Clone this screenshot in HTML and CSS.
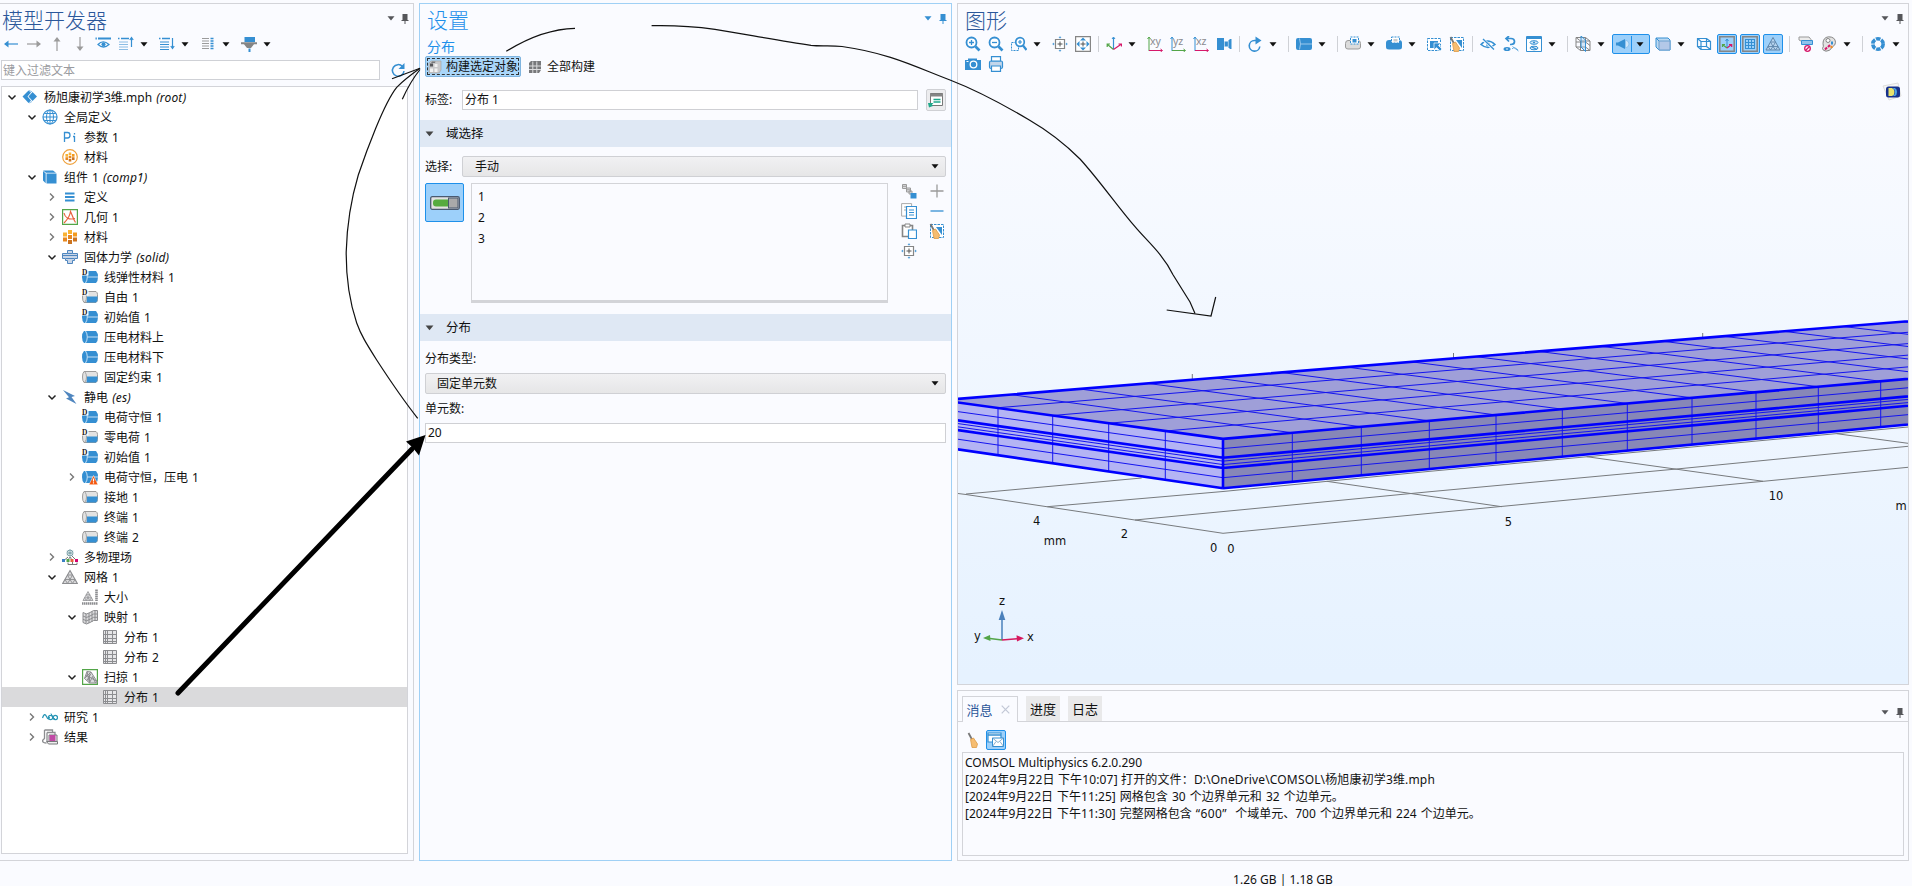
FILE: index.html
```html
<!DOCTYPE html>
<html lang="zh-CN">
<head>
<meta charset="utf-8">
<title>COMSOL Multiphysics</title>
<link rel="stylesheet" href="styles.css">
</head>
<body>
<svg class="defs" width="0" height="0">
  <defs>
    <symbol id="caret" viewBox="0 0 8 5"><path d="M0.5 0.3h7L4 4.6z" fill="currentColor"/></symbol>
    <symbol id="pin" viewBox="0 0 8 10"><path d="M1.5 0h5v6H7.500v1h-3v3h-1V7h-3V6h1z" fill="currentColor"/></symbol>
    <symbol id="open" viewBox="0 0 12 12"><path d="M2.500 4.500L6 8l3.500-3.500" fill="none" stroke="#222" stroke-width="1.500"/></symbol>
    <symbol id="shut" viewBox="0 0 12 12"><path d="M4 2.500L7.500 6L4 9.500" fill="none" stroke="#777" stroke-width="1.400"/></symbol>
    <symbol id="root" viewBox="0 0 16 16"><path d="M.5 7.500L6.500 1.500l2.500 2-3.500 4 3.500 4-2.500 2.500z" fill="#358fd2"/><path d="M6.500 7.500L10.500 3l4.500 4.500L10.500 12z" fill="#358fd2"/><path d="M7 1.500l3 1.200M7 14l3-1.500" stroke="#8fc3ec"/></symbol>
    <symbol id="globe" viewBox="0 0 16 16"><g fill="none" stroke="#358fd2"><circle cx="8" cy="8" r="7" stroke-width="1.200"/><ellipse cx="8" cy="8" rx="3.500" ry="7"/><path d="M8 1v14M1 8h14M2.500 4.500h11M2.500 11.500h11"/></g></symbol>
    <symbol id="param" viewBox="0 0 16 16"><path d="M2.500 13V3.500h3q2.500 0 2.500 2.700T5.500 9h-3M12.500 7v6M11 7.500h1.500M12.500 4v1.500" fill="none" stroke="#358fd2" stroke-width="1.300"/></symbol>
    <symbol id="blocks" viewBox="0 0 16 16"><path d="M6 1h4v4H6z" fill="#f9b233"/><path d="M1 3.500h4v4H1z" fill="#f9b233"/><path d="M11 3.500h4v4h-4z" fill="#f39a1e"/><path d="M6 6h4v4H6zM1 8.500h4v4H1z" fill="#e8871e"/><path d="M11 8.500h4v4h-4zM6 11h4v4H6z" fill="#cc7420"/></symbol>
    <symbol id="mats" viewBox="0 0 16 16"><circle cx="8" cy="8" r="7.300" fill="#fff" stroke="#efa13c" stroke-width="1.200"/><use href="#blocks" x="2.800" y="2.800" width="10.400" height="10.400"/></symbol>
    <symbol id="comp" viewBox="0 0 16 16"><path d="M4.500 4.500h10v10h-10z" fill="#358fd2"/><path d="M1 1.500h10l3 2.200H4zM1 2v9.500l2.700 2.700V4.600z" fill="#358fd2"/></symbol>
    <symbol id="defs3" viewBox="0 0 16 16"><path d="M3 4.500h9.500M3 8h9.500M3 11.500h9.500" stroke="#358fd2" stroke-width="2"/></symbol>
    <symbol id="geom" viewBox="0 0 16 16"><path d="M0.600 0.600h14.800v14.800H0.600z" fill="#fff" stroke="#53a548" stroke-width="1.200"/><path d="M2 14C4 12 8 7 8.500 2.500c2 4 3 8 5 11M2 4c1 5 5 7 11 5.500" fill="none" stroke="#e8613c" stroke-width="1.200"/></symbol>
    <symbol id="solid" viewBox="0 0 16 16"><path d="M5.500 1.500h5v3h5v5h-3v2h-2v3h-5v-3h-2v-2h-3v-5h5z" fill="#c9d6e8" stroke="#4f86bf"/><path d="M0.500 6.500h15M4 9.500h8M5.500 4.500h5" stroke="#4f86bf"/></symbol>
    <symbol id="dom" viewBox="0 0 16 16"><path d="M2 2h12q2 2 2 6t-2 6H2q-2-2-2-6t2-6z" fill="#358fd2"/><path d="M3.500 2q1.800 2.500 1.800 6t-1.800 6M5.500 8H16" fill="none" stroke="#d6e9f8" stroke-width=".9"/></symbol>
    <symbol id="bnd" viewBox="0 0 16 16"><path d="M2 2.500h12q1.500 1 1.500 3v5q0 2-1.500 3H2Q.5 12 .5 8T2 2.500z" fill="#e2e2e2" stroke="#9b9b9b"/><path d="M5 7.500h10.500v3q0 2-1.500 3H4.500z" fill="#358fd2"/><path d="M3 3q1.500 2 1.500 5T3 13" fill="none" stroke="#a5a5a5"/></symbol>
    <symbol id="dd" viewBox="0 0 9 7"><path d="M0 0h6.500v6.500H0z" fill="#fff"/><text class="dmark" x="0" y="6">D</text></symbol>
    <symbol id="domd" viewBox="0 0 16 16"><use href="#dom" width="16" height="16"/><use href="#dd" width="9" height="7"/></symbol>
    <symbol id="bndd" viewBox="0 0 16 16"><use href="#bnd" width="16" height="16"/><use href="#dd" width="9" height="7"/></symbol>
    <symbol id="warn" viewBox="0 0 16 16"><use href="#dom" width="16" height="16"/><path d="M11.500 6.500L16 15.700H7z" fill="#f4570e" stroke="#fff" stroke-width=".5"/><path d="M11.500 9.500v3M11.500 13.300v1.200" stroke="#fff" stroke-width="1.200"/></symbol>
    <symbol id="bolt" viewBox="0 0 16 16"><path d="M1 1l12 6-3.500 1L14.500 15 4 9.500 7 8.300z" fill="#4f86bf"/></symbol>
    <symbol id="multi" viewBox="0 0 16 16"><g fill="none" stroke="#7ba0a8"><circle cx="8" cy="4" r="3"/><path d="M8 .5v7M4.800 2.200l6.400 3.600M4.800 5.800l6.400-3.600"/></g><path d="M6 8L2.500 11M8 8l-2 3M8.500 8l1 3M10 7l4 4M6 13.500v2h9v-2M10.500 12v3.500" fill="none" stroke="#777"/><path d="M0 10h3v3H0z" fill="#3b7fc4"/><path d="M4.500 10h3v3h-3z" fill="#53a548"/><path d="M8.500 10h3v3h-3z" fill="#e8613c"/><path d="M13 10h3v3h-3z" fill="#d6006e"/></symbol>
    <symbol id="mesh" viewBox="0 0 16 16"><path d="M8 1.500L15.300 14.500H.7z" fill="#dcdcde" stroke="#8c8d90" stroke-width="1.100"/><path d="M5.500 6h5L8 10.500zM3 10.500h10L10.500 14.500 8 10.500 5.500 14.500z" fill="none" stroke="#8c8d90" stroke-width=".9"/></symbol>
    <symbol id="size" viewBox="0 0 16 16"><use href="#mesh" x="0" y="1.500" width="12" height="11"/><path d="M14.500 .5V12" stroke="#8c8d90" stroke-width="2.600" stroke-dasharray="1.500 .5"/><path d="M0 14.500h16" stroke="#8c8d90" stroke-width="2.600" stroke-dasharray="1.500 .5"/></symbol>
    <symbol id="map" viewBox="0 0 16 16"><path d="M1 3.500q3.500 3 7 0t7.500-2v10q-4-1-7.500 2t-7 0z" fill="#dcdcde" stroke="#8c8d90"/><path d="M1 7q3.500 3 7 0t7.500-2M1 10.300q3.500 3 7 0t7.500-2M4 4.500v10M7 4v10M10 2.500V13M13 1.500v10" fill="none" stroke="#8c8d90"/></symbol>
    <symbol id="dist" viewBox="0 0 16 16"><path d="M1.500 1.500h13v13h-13z" fill="#e6e6e8" stroke="#8c8d90"/><path d="M3.500 1.500v13M5.500 1.500v13M10.500 1.500v13M1.500 5.500h13M1.500 9.500h13M1.500 12.500h13" stroke="#8c8d90"/></symbol>
    <symbol id="sweep" viewBox="0 0 16 16"><path d="M.6.6h14.800v14.800H.6z" fill="#fff" stroke="#53a548" stroke-width="1.200"/><path d="M2.500 9.500L5 2.500l4 .5 6 9.500v1.500H7.500z" fill="#dcdcde" stroke="#8c8d90"/><path d="M2.500 9.500L9 3M5 2.500L7.500 14l3-6.500 3 6.500M7.500 5.500v8M4 6l11 6.500M5 11.500l4-7" fill="none" stroke="#8c8d90"/></symbol>
    <symbol id="study" viewBox="0 0 16 16"><path d="M.5 9q2-6 4-1.500t3 .5" fill="none" stroke="#2795b5" stroke-width="1.200"/><circle cx="8.500" cy="8.500" r="2.200" fill="none" stroke="#2795b5" stroke-width="1.200"/><circle cx="13.300" cy="8.500" r="2.200" fill="none" stroke="#2795b5" stroke-width="1.200"/><path d="M9 4.500q1 2 2.500 4.500l1.500 1" fill="none" stroke="#2795b5"/></symbol>
    <symbol id="result" viewBox="0 0 16 16"><path d="M2.500 1h8v3M2.500 1v8.500L.5 11.500q0 2.500 4 2.500M5 3.500h8V6M5 3.500V12" fill="none" stroke="#8c8d90" stroke-width="1.300"/><path d="M7 6h8v6.500H7zM4.500 12.500h11v2.500h-9z" fill="#efefef" stroke="#77787b"/><path d="M7.500 6h6v6h-6z" fill="#c04aa5"/></symbol>

    <symbol id="zin" viewBox="0 0 16 16"><circle cx="6.500" cy="6.500" r="5" fill="#fff" stroke="#358fd2" stroke-width="1.800"/><path d="M10.500 10.500l4 4" stroke="#358fd2" stroke-width="2.600"/><path d="M6.500 4v5M4 6.500h5" stroke="#358fd2" stroke-width="1.300"/></symbol>
    <symbol id="zout" viewBox="0 0 16 16"><circle cx="6.500" cy="6.500" r="5" fill="#fff" stroke="#358fd2" stroke-width="1.800"/><path d="M10.500 10.500l4 4" stroke="#358fd2" stroke-width="2.600"/><path d="M4 6.500h5" stroke="#358fd2" stroke-width="1.300"/></symbol>
    <symbol id="zbox" viewBox="0 0 16 16"><path d="M.5 6.500h7v8h-7z" fill="none" stroke="#358fd2" stroke-dasharray="2 1"/><circle cx="9" cy="6" r="4.300" fill="#fff" stroke="#358fd2" stroke-width="1.700"/><path d="M12 9.500l3.500 4.500" stroke="#358fd2" stroke-width="2.200"/><path d="M9 4v4M7 6h4" stroke="#358fd2" stroke-width="1.200"/></symbol>
    <symbol id="zsel" viewBox="0 0 16 16"><path d="M3.500 3.500h9v9h-9z" fill="#fff" stroke="#858585" stroke-width="1.200"/><path d="M8 5.500v5M5.500 8h5" stroke="#555"/><path d="M7 1.800L8 .6l1 1.200zM7 14.200l1 1.200 1-1.200zM1.800 7L.6 8l1.200 1zM14.200 7l1.200 1-1.200 1z" fill="#358fd2" stroke="#358fd2" stroke-width=".5"/></symbol>
    <symbol id="zext" viewBox="0 0 16 16"><path d="M.6.600h14.800v14.800H.6z" fill="#fff" stroke="#858585" stroke-width="1.200"/><path d="M8 5.500v5M5.500 8h5" stroke="#555"/><path d="M5 4.500L8 1.500l3 3zM5 11.500l3 3 3-3zM4.500 5L1.500 8l3 3zM11.500 5l3 3-3 3z" fill="#358fd2"/></symbol>
    <symbol id="axes" viewBox="0 0 16 16"><path d="M7.500 1.500V13" stroke="#358fd2" stroke-width="1.200"/><path d="M6 3L7.500 1 9 3" fill="none" stroke="#358fd2"/><path d="M7.500 13.500L1.500 8.500M1.200 11V8H4" fill="none" stroke="#53a548" stroke-width="1.200"/><path d="M7.500 13.500L15.500 8M12.500 8h3v2.500" fill="none" stroke="#d6186a" stroke-width="1.200"/></symbol>
    <symbol id="vxy" viewBox="0 0 16 16"><path d="M2 15V1.500M.5 3L2 1l1.500 2" fill="none" stroke="#53a548"/><path d="M2 14.500h13M13.500 13l2 1.500-2 1.500" fill="none" stroke="#d6186a"/></symbol>
    <symbol id="vyz" viewBox="0 0 16 16"><path d="M2 15V1.500M.5 3L2 1l1.500 2" fill="none" stroke="#358fd2"/><path d="M2 14.500h13M13.500 13l2 1.500-2 1.500" fill="none" stroke="#53a548"/></symbol>
    <symbol id="vxz" viewBox="0 0 16 16"><path d="M2 15V1.500M.5 3L2 1l1.500 2" fill="none" stroke="#358fd2"/><path d="M2 14.500h13M13.500 13l2 1.500-2 1.500" fill="none" stroke="#d6186a"/></symbol>
    <symbol id="cam2" viewBox="0 0 16 16"><path d="M1 2h7v12H1z" fill="#358fd2"/><path d="M8 5.500h4v5H8zM12 5l2-2h1.500v10H14l-2-2z" fill="#358fd2"/><path d="M8.500 5v6M12.300 5v6" stroke="#d6e9f8" stroke-width=".7"/></symbol>
    <symbol id="rot" viewBox="0 0 16 16"><path d="M10 4.500H7.500a5.300 5.300 0 1 0 5.300 6" fill="none" stroke="#358fd2" stroke-width="1.600"/><path d="M8.500 .5L14.500 4.500l-6 4z" fill="#358fd2"/></symbol>
    <symbol id="cyl" viewBox="0 0 16 16"><rect x="0" y="2" width="16" height="12" rx="2" fill="#358fd2"/><path d="M3.500 2.500q2 5.500 0 11M5 8h11" fill="none" stroke="#9cc9ec"/></symbol>
    <symbol id="selg" viewBox="0 0 16 16"><path d="M3 4.500h10q2.500 0 2.500 3v3.500q0 2-2.500 2H3q-2.500 0-2.500-2V7.500q0-3 2.500-3z" fill="#dcdcdc" stroke="#9b9b9b"/><path d="M5.500 1h8v7h-8z" fill="#fff" stroke="#358fd2" stroke-dasharray="2 1"/><path d="M7.500 3h4v3.500h-4z" fill="#358fd2"/></symbol>
    <symbol id="selb" viewBox="0 0 16 16"><path d="M3 4h10q3 0 3 3v4q0 2.500-3 2.500H3q-3 0-3-2.500V7q0-3 3-3z" fill="#358fd2"/><path d="M5.500 1h8v6h-8z" fill="#fff" stroke="#358fd2" stroke-dasharray="2 1"/><path d="M7.500 3h4v2.500h-4z" fill="#ccc"/></symbol>
    <symbol id="boxsel" viewBox="0 0 16 16"><path d="M1.500 2.500h13v12h-13z" fill="#fff" stroke="#358fd2" stroke-dasharray="2.500 1"/><path d="M4 5h8v7H4z" fill="#358fd2"/><path d="M8 7h7l-2.500 2.500L16 13l-2 2-3.500-3.500L8 14z" fill="#358fd2" stroke="#fff" stroke-width=".7"/></symbol>
    <symbol id="broom" viewBox="0 0 16 16"><path d="M3.500 1L7 7.500" stroke="#777" stroke-width="1.800"/><path d="M5.500 7.500L8.500 6l4 6-1 3.500H7z" fill="#f6bd71" stroke="#dd9a45" stroke-width=".8"/></symbol>
    <symbol id="clear" viewBox="0 0 16 16"><path d="M1.500 1.500h13v13h-13z" fill="#fff" stroke="#358fd2" stroke-dasharray="2.500 1"/><path d="M7 4h6v8z" fill="#358fd2"/><use href="#broom" x="-2" width="16" height="16"/></symbol>
    <symbol id="hide" viewBox="0 0 16 16"><path d="M1 8.500q6.500-7 14 0-7 6-14 0z" fill="#fff" stroke="#358fd2" stroke-width="1.500"/><circle cx="8" cy="8.500" r="2" fill="#358fd2"/><path d="M3 3.500l11 10" stroke="#fafbff" stroke-width="3"/><path d="M3 3l11 10.500" stroke="#358fd2" stroke-width="1.300"/></symbol>
    <symbol id="undo" viewBox="0 0 16 16"><path d="M4 2.500h4q3.500 0 3.500 3T8 8.500H7M6 0L3 2.500 6 5.500" fill="none" stroke="#358fd2" stroke-width="1.700"/><ellipse cx="4" cy="13" rx="3.500" ry="2" fill="#358fd2"/><circle cx="4" cy="13" r=".8" fill="#fff"/><path d="M9.500 10.500l6 4.500M9 13q2-3 6 1" fill="none" stroke="#6aaee0"/></symbol>
    <symbol id="viewwin" viewBox="0 0 16 16"><path d="M.5.500h15v15H.5z" fill="#fff" stroke="#358fd2"/><path d="M0 2h16" stroke="#358fd2" stroke-width="2"/><g fill="#d6e9f8" stroke="#358fd2"><ellipse cx="8" cy="6.500" rx="4" ry="1.800"/><ellipse cx="8" cy="12" rx="4" ry="1.800"/></g><path d="M7 6.500h2M5 10.500l6 3" stroke="#358fd2" stroke-width="1.300"/></symbol>
    <symbol id="wirec" viewBox="0 0 16 16"><path d="M1 1.500h9.500v9.500H1zM5.500 5h9.500v9.500H5.500zM1 1.500L5.500 5M10.500 1.500L15 5M1 11l4.500 3.500M10.500 11l4.500 3.500M1 6h9.500l4.500 3.500" fill="none" stroke="#858585"/><path d="M6 0v11l4.500 4.500V4z" fill="#9cc9ec" fill-opacity=".4" stroke="#358fd2"/></symbol>
    <symbol id="horn" viewBox="0 0 16 16"><path d="M2 6.500h2L11 3v10L4 9.500H2z" fill="#358fd2"/><path d="M11.500 4q3.500 1 3.500 4t-3.500 4z" fill="#cfe6f9" stroke="#7db9e8" stroke-width=".7"/></symbol>
    <symbol id="tcube" viewBox="0 0 16 16"><path d="M1 2h12l2 2v10H4l-3-3z" fill="#bcd9f2" stroke="#358fd2"/><path d="M4 5h11v9H4z" fill="#b3c8e8" stroke="#6c9fce"/><path d="M1 2l3 3" stroke="#358fd2"/></symbol>
    <symbol id="wcube" viewBox="0 0 16 16"><path d="M1.500 2.500h9v8h-9zM5 5.500h9.500v8H5zM1.500 2.500L5 5.500M10.500 2.500l4 3M1.500 10.500L5 13.500M10.500 10.500l4 3" fill="none" stroke="#358fd2" stroke-width="1.200"/></symbol>
    <symbol id="taxes" viewBox="0 0 16 16"><path d="M.8.800h14.400v14.400H.8z" fill="#9dd0fa" stroke="#858585" stroke-width="1.500"/><path d="M8 3v8.500M6.500 5L8 3l1.500 2" fill="none" stroke="#358fd2"/><path d="M8 12L4 9M3.500 11V8.500H6" fill="none" stroke="#53a548" stroke-width="1.200"/><path d="M8 12l4.500-3.500M10 8.500h2.700V11" fill="none" stroke="#d6186a" stroke-width="1.200"/></symbol>
    <symbol id="tgrid" viewBox="0 0 16 16"><path d="M.8.800h14.400v14.400H.8z" fill="#9dd0fa" stroke="#858585" stroke-width="1.500"/><path d="M3 3.500h10M3 6.500h10M3 9.500h10M3 12.500h10M3.500 3v10M6.500 3v10M9.500 3v10M12.500 3v10" stroke="#358fd2"/></symbol>
    <symbol id="tmesh" viewBox="0 0 16 16"><path d="M8 1.500L15 14H1z" fill="#b8d4ee" stroke="#5f86ab"/><path d="M5.500 6h5L8 10.500zM3 10.500h10L10.500 14 8 10.500 5.500 14z" fill="none" stroke="#5f86ab" stroke-width=".9"/></symbol>
    <symbol id="nolegend" viewBox="0 0 16 16"><path d="M1 1h10l2 2.500v2H4L1 4z" fill="#ececec" stroke="#999"/><path d="M3.500 4.500h11v4h-11z" fill="#8fc3ec" stroke="#358fd2"/><circle cx="9.500" cy="12.500" r="2.800" fill="#fff" stroke="#d6186a" stroke-width="1.300"/><path d="M7.500 14.500l4-4" stroke="#d6186a" stroke-width="1.300"/></symbol>
    <symbol id="palette" viewBox="0 0 16 16"><path d="M7.500.800q6.700 0 7 5.500 0 3-3 4.500Q9 15.500 5 15.200 1.500 14.500 1.500 12.500 3 10.500 2 7.500 2 1.500 7.500.8z" fill="#e2e2e2" stroke="#858585"/><circle cx="7" cy="4.500" r="2" fill="#fff" stroke="#858585"/><path d="M11 5.500v3" stroke="#358fd2" stroke-width="2"/><path d="M7 11l2-2M4 13.500l2-2" stroke="#d6186a" stroke-width="2"/><path d="M9.500 11.500l2-1" stroke="#f08a24" stroke-width="2"/></symbol>
    <symbol id="shutter" viewBox="0 0 16 16"><circle cx="8" cy="8" r="5.200" fill="none" stroke="#358fd2" stroke-width="3.600" stroke-dasharray="4.500 .945"/></symbol>
    <symbol id="photo" viewBox="0 0 16 16"><path d="M0 4h3V2.500h9V4h4v10H0z" fill="#358fd2"/><circle cx="8.500" cy="8.500" r="3.300" fill="#358fd2" stroke="#fff" stroke-width="1.300"/><path d="M1.500 5.500h2" stroke="#fff"/></symbol>
    <symbol id="printer" viewBox="0 0 16 16"><rect x="1.500" y="5" width="13" height="7.500" rx="1.500" fill="#c3d6ea" stroke="#358fd2" stroke-width="1.200"/><path d="M3.500.600h9V5h-9zM3.500 10h9v5.400h-9z" fill="#fff" stroke="#358fd2" stroke-width="1.200"/></symbol>

    <symbol id="left" viewBox="0 0 16 16"><path d="M2 8h13" stroke="#358fd2" stroke-width="1.200"/><path d="M1 8l4.500-3.500v7z" fill="#358fd2"/></symbol>
    <symbol id="right" viewBox="0 0 16 16"><path d="M1 8h13" stroke="#9b9b9b" stroke-width="1.200"/><path d="M15 8l-4.500-3.500v7z" fill="#9b9b9b"/></symbol>
    <symbol id="up" viewBox="0 0 16 16"><path d="M8 15V2" stroke="#9b9b9b" stroke-width="1.200"/><path d="M8 1L4.500 5.500h7z" fill="#9b9b9b"/></symbol>
    <symbol id="down" viewBox="0 0 16 16"><path d="M8 1v13" stroke="#9b9b9b" stroke-width="1.200"/><path d="M8 15l-3.500-4.500h7z" fill="#9b9b9b"/></symbol>
    <symbol id="eye" viewBox="0 0 16 16"><path d="M3 2.500h13" stroke="#358fd2" stroke-width="2"/><path d="M.5 2.500h1.300" stroke="#358fd2" stroke-width="2"/><path d="M3 8.500q5-5.500 11 0-5.500 5-11 0z" fill="#fff" stroke="#358fd2" stroke-width="1.200"/><circle cx="8.500" cy="8.300" r="2" fill="#358fd2"/></symbol>
    <symbol id="colup" viewBox="0 0 16 16"><path d="M0 2.500h1.500M3 2.500h8" stroke="#358fd2" stroke-width="1.500"/><path d="M1 6h9M1 8.500h9M1 11h9M1 13.500h9" stroke="#8abce4"/><path d="M13.500 11V2M11.800 4l1.700-2.500L15.200 4" fill="none" stroke="#358fd2" stroke-width="1.200"/></symbol>
    <symbol id="coldn" viewBox="0 0 16 16"><path d="M0 2.500h1.500M3 2.500h8" stroke="#358fd2" stroke-width="1.500"/><path d="M1 6h9M1 8.500h9M1 11h9M1 13.500h9" stroke="#358fd2"/><path d="M13.500 2v10M11.800 10l1.700 2.500 1.700-2.500" fill="none" stroke="#358fd2" stroke-width="1.200"/></symbol>
    <symbol id="cols" viewBox="0 0 16 16"><path d="M2 2.500h7M2 5h7M2 7.500h7M2 10h7M2 12.500h7" stroke="#9b9b9b"/><path d="M10.500 2.500h3M10.500 5h3M10.500 7.500h3M10.500 10h3M10.500 12.500h3" stroke="#358fd2" stroke-width="1.300"/></symbol>
    <symbol id="funnel" viewBox="0 0 16 16"><path d="M0 6.300h16v2h-3L10 12H6L3 8.300H0z" fill="#858585"/><path d="M3.500 1h10.500v5H3.500zM7.500 12.500h2V16h-2z" fill="#358fd2"/></symbol>
    <symbol id="refresh" viewBox="0 0 16 16"><path d="M12.500 4.500A5.800 5.800 0 1 0 14 9" fill="none" stroke="#358fd2" stroke-width="1.500"/><path d="M14.500 1v6H8.500z" fill="#358fd2"/></symbol>
    <symbol id="build" viewBox="0 0 14 14"><path d="M1 3l2-2h10v9l-2 3H1z" fill="#c9c9cb" stroke="#a0a0a0" stroke-width=".6"/><path d="M2 3.500h3v3H2z" fill="#55565a"/><path d="M6.500 4h3v3h-3zM6.500 8.500h3v3.500h-3zM2 8.500h3v3.500H2z" fill="#f2f2f2"/><path d="M4 1.500h3.500L7 3H3z" fill="#77787b"/></symbol>
    <symbol id="buildall" viewBox="0 0 14 14"><path d="M1 3l2-2h10v9l-2 3H1z" fill="#77787b"/><path d="M4.800 1.500V13M8.800 1.500V13M1 6h12M1 9.500h12" stroke="#dcdcde"/></symbol>
    <symbol id="rename" viewBox="0 0 16 16"><path d="M2.500 1.500h12v12h-12z" fill="#fff" stroke="#777"/><path d="M2 3h13" stroke="#858585" stroke-width="3"/><path d="M5.500 7.500h7M5.500 10h7" stroke="#1fa88a" stroke-width="1.300"/><path d="M0 11h5.500L4 12.500 5 14l-1.500.5L1 15.500z" fill="#1fa88a"/></symbol>
    <symbol id="chain" viewBox="0 0 16 16"><g fill="#dcdcde" stroke="#9b9b9b"><path d="M1.500 1.500h4v4h-4zM5.500 5h4v4h-4zM8 8h3v3H8z"/><path d="M1.500 3.300h4M5.500 6.800h4"/></g><path d="M9.500 10h6v5.500h-6z" fill="#358fd2"/></symbol>
    <symbol id="copy" viewBox="0 0 16 16"><path d="M.6.600h10v12.500H.6z" fill="#fff" stroke="#aaa"/><path d="M3 4h3M3 7h3" stroke="#aaa"/><path d="M5.500 3.500h10v12h-10z" fill="#fff" stroke="#358fd2" stroke-width="1.200"/><path d="M8 7h5M8 9.500h5M8 12h5" stroke="#358fd2"/></symbol>
    <symbol id="paste" viewBox="0 0 16 16"><path d="M1.500 2.500h10v11h-10z" fill="#fff" stroke="#858585" stroke-width="1.600"/><path d="M4 1h5v3H4z" fill="#fff" stroke="#858585"/><path d="M7.500 7h8v8.500h-8z" fill="#fff" stroke="#358fd2" stroke-width="1.200"/></symbol>
    <symbol id="plus" viewBox="0 0 16 16"><path d="M8 1.500v13M1.500 8h13" stroke="#9b9b9b" stroke-width="1.300"/></symbol>
    <symbol id="minus" viewBox="0 0 16 16"><path d="M1.500 8h13" stroke="#358fd2" stroke-width="1.300"/></symbol>
    <symbol id="mail" viewBox="0 0 18 16"><path d="M1 1h13v9H1z" fill="#fff" stroke="#358fd2" stroke-width="1.200"/><path d="M1 3h13" stroke="#358fd2" stroke-width="1.500"/><path d="M5.500 6h11v8.500h-11z" fill="#fff" stroke="#358fd2"/><path d="M5.500 6l5.500 4.500L16.500 6M5.500 14.500L9 9.500M16.500 14.500L13 9.500" fill="none" stroke="#6f9cc0" stroke-width=".8"/></symbol>
    <symbol id="logo3d" viewBox="0 0 20 20"><path d="M1 4l15-3 3 13-12 4z" fill="#f5f5f5" stroke="#dedede"/><rect x="4" y="4.500" width="14" height="11" rx="2.500" fill="#17318c"/><path d="M6.500 6H10q2.500 1 2.500 4T10 14H6.500z" fill="#e9e36b"/><path d="M10.500 6q2.500 1 2.500 4t-2.500 4H13q2-1 2-4t-2-4z" fill="#4ba3e6"/></symbol>
  </defs>
</svg>

<div class="app">
  <section class="panel model">
    <header class="head"><h1>模型开发器</h1><span class="winctl"><svg class="caret"><use href="#caret"/></svg><svg class="pin"><use href="#pin"/></svg></span></header>
    <div class="mtools">
      <svg class="ic"><use href="#left"/></svg><svg class="ic"><use href="#right"/></svg><svg class="ic"><use href="#up"/></svg><svg class="ic"><use href="#down"/></svg><svg class="ic"><use href="#eye"/></svg>
      <span class="pair"><svg class="ic"><use href="#colup"/></svg><svg class="caret"><use href="#caret"/></svg></span>
      <span class="pair"><svg class="ic"><use href="#coldn"/></svg><svg class="caret"><use href="#caret"/></svg></span>
      <span class="pair"><svg class="ic"><use href="#cols"/></svg><svg class="caret"><use href="#caret"/></svg></span>
      <span class="pair"><svg class="ic"><use href="#funnel"/></svg><svg class="caret"><use href="#caret"/></svg></span>
    </div>
    <div class="filter"><div class="box">键入过滤文本</div><svg class="ic"><use href="#refresh"/></svg></div>
    <ul class="tree">
      <li class="l0"><svg class="tw"><use href="#open"/></svg><svg class="ic"><use href="#root"/></svg><span>杨旭康初学3维.mph <i>(root)</i></span></li>
      <li class="l1"><svg class="tw"><use href="#open"/></svg><svg class="ic"><use href="#globe"/></svg><span>全局定义</span></li>
      <li class="l2"><svg class="tw"></svg><svg class="ic"><use href="#param"/></svg><span>参数 1</span></li>
      <li class="l2"><svg class="tw"></svg><svg class="ic"><use href="#mats"/></svg><span>材料</span></li>
      <li class="l1"><svg class="tw"><use href="#open"/></svg><svg class="ic"><use href="#comp"/></svg><span>组件 1 <i>(comp1)</i></span></li>
      <li class="l2"><svg class="tw"><use href="#shut"/></svg><svg class="ic"><use href="#defs3"/></svg><span>定义</span></li>
      <li class="l2"><svg class="tw"><use href="#shut"/></svg><svg class="ic"><use href="#geom"/></svg><span>几何 1</span></li>
      <li class="l2"><svg class="tw"><use href="#shut"/></svg><svg class="ic"><use href="#blocks"/></svg><span>材料</span></li>
      <li class="l2"><svg class="tw"><use href="#open"/></svg><svg class="ic"><use href="#solid"/></svg><span>固体力学 <i>(solid)</i></span></li>
      <li class="l3"><svg class="tw"></svg><svg class="ic"><use href="#domd"/></svg><span>线弹性材料 1</span></li>
      <li class="l3"><svg class="tw"></svg><svg class="ic"><use href="#bndd"/></svg><span>自由 1</span></li>
      <li class="l3"><svg class="tw"></svg><svg class="ic"><use href="#domd"/></svg><span>初始值 1</span></li>
      <li class="l3"><svg class="tw"></svg><svg class="ic"><use href="#dom"/></svg><span>压电材料上</span></li>
      <li class="l3"><svg class="tw"></svg><svg class="ic"><use href="#dom"/></svg><span>压电材料下</span></li>
      <li class="l3"><svg class="tw"></svg><svg class="ic"><use href="#bnd"/></svg><span>固定约束 1</span></li>
      <li class="l2"><svg class="tw"><use href="#open"/></svg><svg class="ic"><use href="#bolt"/></svg><span>静电 <i>(es)</i></span></li>
      <li class="l3"><svg class="tw"></svg><svg class="ic"><use href="#domd"/></svg><span>电荷守恒 1</span></li>
      <li class="l3"><svg class="tw"></svg><svg class="ic"><use href="#bndd"/></svg><span>零电荷 1</span></li>
      <li class="l3"><svg class="tw"></svg><svg class="ic"><use href="#domd"/></svg><span>初始值 1</span></li>
      <li class="l3"><svg class="tw"><use href="#shut"/></svg><svg class="ic"><use href="#warn"/></svg><span>电荷守恒，压电 1</span></li>
      <li class="l3"><svg class="tw"></svg><svg class="ic"><use href="#bnd"/></svg><span>接地 1</span></li>
      <li class="l3"><svg class="tw"></svg><svg class="ic"><use href="#bnd"/></svg><span>终端 1</span></li>
      <li class="l3"><svg class="tw"></svg><svg class="ic"><use href="#bnd"/></svg><span>终端 2</span></li>
      <li class="l2"><svg class="tw"><use href="#shut"/></svg><svg class="ic"><use href="#multi"/></svg><span>多物理场</span></li>
      <li class="l2"><svg class="tw"><use href="#open"/></svg><svg class="ic"><use href="#mesh"/></svg><span>网格 1</span></li>
      <li class="l3"><svg class="tw"></svg><svg class="ic"><use href="#size"/></svg><span>大小</span></li>
      <li class="l3"><svg class="tw"><use href="#open"/></svg><svg class="ic"><use href="#map"/></svg><span>映射 1</span></li>
      <li class="l4"><svg class="tw"></svg><svg class="ic"><use href="#dist"/></svg><span>分布 1</span></li>
      <li class="l4"><svg class="tw"></svg><svg class="ic"><use href="#dist"/></svg><span>分布 2</span></li>
      <li class="l3"><svg class="tw"><use href="#open"/></svg><svg class="ic"><use href="#sweep"/></svg><span>扫掠 1</span></li>
      <li class="l4 selected"><svg class="tw"></svg><svg class="ic"><use href="#dist"/></svg><span>分布 1</span></li>
      <li class="l1"><svg class="tw"><use href="#shut"/></svg><svg class="ic"><use href="#study"/></svg><span>研究 1</span></li>
      <li class="l1"><svg class="tw"><use href="#shut"/></svg><svg class="ic"><use href="#result"/></svg><span>结果</span></li>
    </ul>
  </section>

  <section class="panel settings">
    <header class="head"><h1>设置</h1><span class="winctl"><svg class="caret"><use href="#caret"/></svg><svg class="pin"><use href="#pin"/></svg></span></header>
    <div class="subtitle">分布</div>
    <div class="builds">
      <span class="btn active"><svg class="b14"><use href="#build"/></svg>构建选定对象</span>
      <span class="btn"><svg class="b14"><use href="#buildall"/></svg>全部构建</span>
    </div>
    <div class="row labelrow"><label>标签:</label><div class="input">分布 1</div><span class="sq"><svg class="ic"><use href="#rename"/></svg></span></div>
    <div class="section"><svg class="caret"><use href="#caret"/></svg>域选择</div>
    <div class="row selrow"><label>选择:</label><div class="select">手动<svg class="caret"><use href="#caret"/></svg></div></div>
    <div class="picker">
      <div class="toggle"><svg width="30" height="14" viewBox="0 0 30 14"><rect x=".7" y=".7" width="28.600" height="12.600" rx="1.500" fill="#e2e2e2" stroke="#4a5a70" stroke-width="1.300"/><rect x="3" y="3.500" width="18" height="7" rx="3" fill="#56ab3f"/><rect x="18.500" y="2" width="9.500" height="10" fill="#aaa" stroke="#4a5a70"/></svg></div>
      <div class="list"><div>1</div><div>2</div><div>3</div></div>
      <div class="acts"><svg class="ic"><use href="#chain"/></svg><svg class="ic"><use href="#plus"/></svg><svg class="ic"><use href="#copy"/></svg><svg class="ic"><use href="#minus"/></svg><svg class="ic"><use href="#paste"/></svg><svg class="ic"><use href="#clear"/></svg><svg class="ic"><use href="#zsel"/></svg></div>
    </div>
    <div class="section second"><svg class="caret"><use href="#caret"/></svg>分布</div>
    <div class="field"><label>分布类型:</label><div class="select">固定单元数<svg class="caret"><use href="#caret"/></svg></div></div>
    <div class="field count"><label>单元数:</label><div class="input">20</div></div>
  </section>

  <div class="right">
    <section class="panel graphics">
      <header class="head"><h1>图形</h1><span class="winctl"><svg class="caret"><use href="#caret"/></svg><svg class="pin"><use href="#pin"/></svg></span></header>
      <div class="gtools">
        <svg class="t"><use href="#zin"/></svg><svg class="t"><use href="#zout"/></svg><svg class="t"><use href="#zbox"/></svg><svg class="caret"><use href="#caret"/></svg><svg class="t"><use href="#zsel"/></svg><svg class="t"><use href="#zext"/></svg><b class="sep"></b>
        <svg class="t"><use href="#axes"/></svg><svg class="caret"><use href="#caret"/></svg>
        <span class="v">xy<svg><use href="#vxy"/></svg></span><span class="v">yz<svg><use href="#vyz"/></svg></span><span class="v">xz<svg><use href="#vxz"/></svg></span><svg class="t"><use href="#cam2"/></svg><b class="sep"></b>
        <svg class="t"><use href="#rot"/></svg><svg class="caret"><use href="#caret"/></svg><b class="sep"></b>
        <svg class="t"><use href="#cyl"/></svg><svg class="caret"><use href="#caret"/></svg><b class="sep"></b>
        <svg class="t"><use href="#selg"/></svg><svg class="caret"><use href="#caret"/></svg><svg class="t"><use href="#selb"/></svg><svg class="caret tight"><use href="#caret"/></svg><svg class="t"><use href="#boxsel"/></svg><svg class="t"><use href="#clear"/></svg><b class="sep"></b>
        <svg class="t"><use href="#hide"/></svg><svg class="t"><use href="#undo"/></svg><svg class="t"><use href="#viewwin"/></svg><svg class="caret"><use href="#caret"/></svg><b class="sep"></b>
        <svg class="t"><use href="#wirec"/></svg><svg class="caret"><use href="#caret"/></svg>
        <span class="split"><svg class="ic"><use href="#horn"/></svg><span><svg class="caret"><use href="#caret"/></svg></span></span>
        <svg class="t"><use href="#tcube"/></svg><svg class="caret"><use href="#caret"/></svg><svg class="t"><use href="#wcube"/></svg>
        <span class="on"><svg class="ic"><use href="#taxes"/></svg></span><span class="on"><svg class="ic"><use href="#tgrid"/></svg></span><span class="on"><svg class="ic"><use href="#tmesh"/></svg></span><b class="sep last"></b>
        <svg class="t"><use href="#nolegend"/></svg><svg class="t"><use href="#palette"/></svg><svg class="caret"><use href="#caret"/></svg><b class="sep"></b><svg class="t"><use href="#shutter"/></svg><svg class="caret"><use href="#caret"/></svg>
      </div>
      <div class="gtools two"><svg class="t"><use href="#photo"/></svg><svg class="t"><use href="#printer"/></svg></div>
      <svg class="logo3d"><use href="#logo3d"/></svg>
      <svg class="scene" viewBox="958 76 950 608">
        <g class="axisgrid">
          <path d="M958 493.500L966 494.500L1223 533.300L1430 513.300L1763.300 481.300L1908 467.300"/>
          <path d="M966 494L1141.700 478"/>
          <path d="M1047.300 506.700L1223 491.500L1430 471.300L1908 427"/>
          <path d="M1135 520L1430 491.700L1676.700 469L1908 446.300"/>
          <path d="M1326.700 481.300L1501.700 506.700M1586.700 456.700L1763.300 481.300M1836.700 433.700L1908 443.300"/>
          <path d="M1192.300 374v6M1453.500 353v6M1702.700 333v6"/>
        </g>
        <g id="beam"></g>
        <g class="ticks">
          <text x="1036.700" y="525">4</text><text x="1124.500" y="538">2</text><text x="1055" y="545">mm</text><text x="1213.700" y="552">0</text><text x="1231" y="553">0</text><text x="1508.500" y="526">5</text><text x="1776" y="500">10</text><text x="1901" y="510">m</text>
          <text x="1002" y="605">z</text><text x="977.500" y="640">y</text><text x="1030.500" y="641">x</text>
        </g>
        <path d="M1002 640V618" stroke="#4a80bb" stroke-width="1.500"/><path d="M1002 610l3.300 10h-6.600z" fill="#4a80bb"/>
        <path d="M1002 640L990 638.500" stroke="#53a548" stroke-width="1.500"/><path d="M983 638l7-3 .5 6z" fill="#53a548"/>
        <path d="M1002 640L1017 638.800" stroke="#d6185e" stroke-width="1.500"/><path d="M1024 638.300l-7.500-3 .5 6.300z" fill="#d6185e"/>
      </svg>
    </section>
    <section class="panel messages">
      <div class="tabs"><span class="tab cur">消息<svg width="9" height="9" viewBox="0 0 9 9"><path d="M.7.7l7.600 7.600M8.300.7L.7 8.300" stroke="#c2c8d6" stroke-width="1.200"/></svg></span><span class="tab">进度</span><span class="tab">日志</span><span class="winctl"><svg class="caret"><use href="#caret"/></svg><svg class="pin"><use href="#pin"/></svg></span></div>
      <div class="msgtools"><svg class="ic"><use href="#broom"/></svg><span class="mailbtn"><svg width="18" height="16"><use href="#mail"/></svg></span></div>
      <div class="log">
        <div>COMSOL Multiphysics 6.2.0.290</div>
        <div class="file">[2024年9月22日 下午10:07] 打开的文件：D:\OneDrive\COMSOL\杨旭康初学3维.mph</div>
        <div class="cn">[2024年9月22日 下午11:25] 网格包含 30 个边界单元和 32 个边单元。</div>
        <div class="cn">[2024年9月22日 下午11:30] 完整网格包含<span class="quoted">“600”</span> 个域单元、700 个边界单元和 224 个边单元。</div>
      </div>
    </section>
  </div>
</div>
<footer class="status">1.26 GB | 1.18 GB</footer>

<svg class="ink" viewBox="0 0 1912 886">
  <g fill="none" stroke="#111" stroke-width="1.200">
    <path d="M417.700 418.300C404 401 391 382 376.700 360C366 343 361 335 356.700 323C350 303 346 280 346.200 252C347 222 352 196 358.300 175C366 152 384 103 396.700 87.300C404 80 412 74 420 68.300"/>
    <path d="M392 78.700L420 68.300M402.300 99.300Q410 82 420 69.500"/>
    <path d="M506.300 51.300Q542 29 575 28.300"/>
    <path d="M651.600 25.700Q684 25 715 29.300C750 35 780 41 811 45.300C822 46.500 830 45 842 46.500C890 53 920 69 950 80C976 90 1004 105 1029.300 120C1050 132 1064 143 1080 159C1100 181 1117 206 1135 226.700C1146 240 1163 254 1173 274.700L1190 302L1195 313.500"/>
    <path d="M1166.700 310L1211 316L1215.700 297"/>
  </g>
  <path d="M178 693L412 449" stroke="#000" stroke-width="5" stroke-linecap="round"/>
  <path d="M425.500 435L419 455.500L413 448L406 441.500z" fill="#000"/>
</svg>
<script src="scene.js"></script>
</body>
</html>
```
FILE: styles.css
```css
* { box-sizing: border-box; }
body {
  margin: 0;
  width: 1912px;
  height: 886px;
  overflow: hidden;
  position: relative;
  background: #fafbff;
  color: #111;
  font: 12px/16px "Noto Sans", "Noto Sans CJK SC", sans-serif;
}
.defs { position: absolute; }
.dmark { font: bold 7.5px "Liberation Serif", serif; fill: #222; }
svg { display: block; flex: none; }
.ic { width: 16px; height: 16px; }
.caret { width: 8px; height: 5px; color: #111; }
.pin { width: 8px; height: 10px; }

.app { display: flex; height: 861px; padding-top: 3px; }
.panel { border: 1px solid #d3d4d9; background: #fafbff; }
.model { width: 414px; height: 858px; border-left: 0; }
.settings { width: 533px; height: 858px; margin-left: 5px; border-color: #9fd0f5; }
.right { display: flex; flex-direction: column; gap: 5px; width: 952px; margin-left: 5px; }
.graphics { height: 682px; }
.messages { height: 171px; }

.head { display: flex; justify-content: space-between; height: 31px; padding: 0 4px 0 2px; }
.head h1 { margin: 0; font-size: 21px; line-height: 32px; font-weight: 300; color: #2b579a; }
.winctl { display: flex; align-items: center; gap: 6px; height: 23px; margin-top: 3px; }
.winctl svg { color: #55565a; }

/* model builder */
.mtools { display: flex; align-items: center; gap: 7px; height: 18px; padding-left: 3px; }
.mtools .pair { display: flex; align-items: center; width: 34px; gap: 9px; }
.mtools .pair .caret { margin-left: -3px; }
.filter { display: flex; align-items: center; margin-top: 7px; padding-left: 1px; gap: 10px; }
.filter .box { width: 379px; height: 20px; border: 1px solid #cfd1d6; background: #fff; color: #9a9ba0; line-height: 19px; padding-left: 1px; }
.tree { list-style: none; margin: 6px 0 0 1px; padding: 0; width: 407px; height: 768px; border: 1px solid #d3d4d9; background: #fff; }
.tree li { display: flex; align-items: center; height: 20px; white-space: nowrap; word-spacing: 1px; }
.tree span { padding-top: 1px; }
.tree .tw { width: 12px; height: 12px; margin-right: 4px; }
.tree .ic { margin-right: 6px; }
.tree i { letter-spacing: .15px; }
.l0 { padding-left: 4px; }
.l1 { padding-left: 24px; }
.l2 { padding-left: 44px; }
.l3 { padding-left: 64px; }
.l4 { padding-left: 84px; }
.selected { background: #dadadc; }

/* settings */
.settings .head { padding-left: 7px; }
.settings .head h1 { color: #1e90ea; }
.settings .head .winctl svg { color: #358fd2; }
.settings .head .winctl { gap: 7px; }
.subtitle { font-size: 14px; line-height: 20px; height: 20px; margin-top: 2px; padding-left: 7px; color: #1e90ea; }
.builds { display: flex; gap: 5px; height: 21px; margin-top: -1px; padding-left: 5px; }
.btn { display: flex; align-items: center; gap: 5px; height: 21px; padding-left: 2px; }
.btn.active { width: 96px; border: 1px solid #7fb4df; border-radius: 2px; background: #a9d6fa; outline: 1px dashed #333; outline-offset: -3px; gap: 4px; }
.b14 { width: 14px; height: 14px; }
.row { display: flex; align-items: center; padding-left: 5px; }
.row label { width: 37px; }
.labelrow { margin-top: 12px; }
.input { height: 20px; border: 1px solid #cfd0d4; background: #fff; line-height: 18px; padding-left: 2px; }
.labelrow .input { width: 456px; }
.sq { display: flex; align-items: center; justify-content: center; width: 20px; height: 22px; margin-left: 8px; border: 1px solid #cfd0d4; border-radius: 2px; background: #ececee; }
.section { display: flex; align-items: center; height: 27px; margin-top: 9px; padding-left: 5px; background: #dfe8f4; font-size: 12.5px; gap: 12px; }
.section .caret { width: 9px; height: 6px; color: #444; }
.selrow { margin-top: 9px; }
.select { display: flex; align-items: center; justify-content: space-between; height: 21px; width: 484px; padding: 0 6px 0 12px; border: 1px solid #cfd0d4; border-radius: 2px; background: linear-gradient(#f1f1f3, #e6e6e7); }
.picker { display: flex; margin-top: 6px; padding-left: 5px; height: 120px; }
.toggle { display: flex; align-items: center; justify-content: center; width: 39px; height: 39px; border: 1.5px solid #1e90ea; border-radius: 2px; background: #9dd0fa; }
.list { width: 417px; height: 120px; margin-left: 7px; padding: 2px 6px; border: 1px solid #d3d4d8; border-bottom-width: 3px; line-height: 21px; }
.acts { display: grid; grid-template-columns: 16px 16px; gap: 4px 12px; margin-left: 13px; align-content: start; }
.second { margin-top: 11px; }
.field { padding: 10px 5px 0; }
.field label { display: block; height: 16px; }
.field .select { width: 521px; margin-top: 6px; padding-left: 11px; }
.field.count { padding-top: 7px; }
.field .input { width: 521px; margin-top: 6px; }

/* graphics */
.graphics { position: relative; background: linear-gradient(#fafbff 75px, #e6f2ff 670px); overflow: hidden; }
.graphics .head { padding-left: 7px; }
.graphics .head .winctl { gap: 7px; }
.gtools { position: relative; z-index: 1; display: flex; align-items: center; height: 20px; margin-top: -1px; padding-left: 3px; }
.gtools .t { width: 23px; height: 16px; padding: 0 3px 0 4px; }
.gtools > .caret { margin: 0 7px 0 3px; }
.gtools > .caret.tight { margin-right: 6px; }
.sep { width: 1px; height: 16px; margin: 0 3px 0 4px; background: #cfd1d6; }
.sep.last { margin: 0 4px 0 5px; }
.v { display: block; position: relative; width: 23px; height: 16px; padding-left: 7px; font-size: 10.5px; line-height: 10px; color: #8a8b90; }
.v svg { position: absolute; left: 4px; top: 0; width: 16px; height: 16px; }
.split { display: flex; width: 38px; height: 20px; border: 1px solid #1e90ea; border-radius: 2px; background: #9dd0fa; align-items: center; padding-left: 1px; margin-right: 1px; }
.split span { display: flex; align-items: center; height: 16px; margin-left: 1px; padding-left: 4px; border-left: 1px solid #1e90ea; }
.on { display: flex; align-items: center; justify-content: center; width: 20px; height: 20px; margin: 0 1px 0 2px; border: 1px solid #1e90ea; border-radius: 2px; background: #9dd0fa; }
.two { margin-top: 0; }
.logo3d { position: absolute; right: 6px; top: 78px; width: 20px; height: 20px; z-index: 1; }
.scene { position: absolute; left: 0; top: 72px; width: 950px; height: 608px; }
.axisgrid path { fill: none; stroke: #777a7d; stroke-width: 1; }
.ticks text { font: 11.5px "DejaVu Sans", sans-serif; text-anchor: middle; fill: #111; }
.edge { fill: none; stroke: #0000ff; stroke-width: 2.6; }
.thin { fill: none; stroke: #1414f0; stroke-width: 1; }

/* messages */
.tabs { display: flex; height: 31px; padding: 5px 4px 0; border-bottom: 1px solid #d3d4d9; position: relative; }
.tab { display: flex; align-items: center; height: 25px; width: 34px; justify-content: center; margin-right: 8px; background: #e9e9ea; font-size: 13px; }
.tab.cur { width: 56px; height: 26px; padding-right: 4px; gap: 8px; color: #2b579a; background: #fafbff; border: 1px solid #d3d4d9; border-bottom: 0; }
.tabs .winctl { margin: 5px 0 0 auto; gap: 7px; }
.msgtools { display: flex; align-items: center; height: 30px; padding: 6px 0 0 7px; gap: 5px; }
.mailbtn { display: flex; align-items: center; justify-content: center; width: 20px; height: 20px; border: 1px solid #1e90ea; border-radius: 2px; background: #9dd0fa; }
.log { width: 942px; height: 104px; margin-left: 4px; padding: 1px 2px; border: 1px solid #d3d4d9; line-height: 17px; white-space: nowrap; }
.log .cn { word-spacing: 1px; }
.log .file { letter-spacing: .15px; }
.quoted { margin: 0 4px 0 4px; letter-spacing: .4px; }
.status { display: flex; justify-content: center; padding-left: 654px; margin-top: 13px; height: 12px; line-height: 12px; font-size: 12px; }
.ink { position: absolute; left: 0; top: 0; width: 1912px; height: 886px; pointer-events: none; z-index: 5; }
```
FILE: scene.js
```js
// Draws the meshed beam in perspective.
(function () {
  var NS = 'http://www.w3.org/2000/svg';
  var beam = document.getElementById('beam');

  function add(d, cls, fill) {
    var p = document.createElementNS(NS, 'path');
    p.setAttribute('d', d);
    if (cls) p.setAttribute('class', cls);
    if (fill) p.setAttribute('fill', fill);
    beam.appendChild(p);
  }
  // projective map of the unit square onto four corners
  function homography(p0, p1, p2, p3) {
    var dx1 = p1[0] - p2[0], dx2 = p3[0] - p2[0], sx = p0[0] - p1[0] + p2[0] - p3[0];
    var dy1 = p1[1] - p2[1], dy2 = p3[1] - p2[1], sy = p0[1] - p1[1] + p2[1] - p3[1];
    var det = dx1 * dy2 - dx2 * dy1;
    var g = (sx * dy2 - dx2 * sy) / det, h = (dx1 * sy - sx * dy1) / det;
    return function (u, v) {
      var w = g * u + h * v + 1;
      return [
        ((p1[0] - p0[0] + g * p1[0]) * u + (p3[0] - p0[0] + h * p3[0]) * v + p0[0]) / w,
        ((p1[1] - p0[1] + g * p1[1]) * u + (p3[1] - p0[1] + h * p3[1]) * v + p0[1]) / w
      ];
    };
  }
  function line(f, a, b, c, d) {
    return 'M' + f(a, b).join(' ') + 'L' + f(c, d).join(' ');
  }
  function face(f, n) {
    return 'M' + [f(0, 0), f(n, 0), f(n, 1), f(0, 1)].map(function (p) { return p.join(' '); }).join('L') + 'Z';
  }

  var top = homography([1223, 438.9], [1880.7, 381.3], [1601, 346.3], [941, 400.3]);
  var side = homography([1223, 438.9], [1880.7, 381.3], [1880.7, 427], [1223, 488.3]);
  var end = homography([1223, 438.9], [998, 408], [998, 455.2], [1223, 488.3]);
  var far = 1.65, endFar = 1.24, k, i;
  var thick = [0, 0.383, 0.59, 1], thin = [0.195, 0.45, 0.52, 0.785];
  // x of the cross-section lines on the near long edge
  var cuts = [1292.3, 1361.3, 1429.3, 1496, 1562.3, 1627.3, 1692, 1756, 1818.3, 1880.7];

  add(face(top, far), '', '#9f9fd8');
  add(face(side, far), '', '#8787b7');
  add(face(end, endFar), '', '#b4b4f4');

  var grid = '';
  for (k = 1; k <= 16; k++) grid += line(top, k / 10, 0, k / 10, 1);
  cuts.forEach(function (x) {
    var t = (x - 1223) / 657.7;
    grid += 'M' + x + ' ' + (438.9 - 57.6 * t) + 'V' + (488.3 - 61.3 * t);
  });
  for (k = 1; k < 5; k++) grid += line(top, 0, k / 5, far, k / 5);
  [1165.3, 1108.7, 1052.7, 998].forEach(function (x) {
    var t = (1223 - x) / 225;
    grid += 'M' + x + ' ' + (438.9 - 30.9 * t) + 'V' + (488.3 - 33.1 * t);
  });
  for (i = 0; i < thin.length; i++) grid += line(side, 0, thin[i], far, thin[i]) + line(end, 0, thin[i], endFar, thin[i]);
  add(grid, 'thin');

  var edges = line(top, 0, 1, far, 1) + line(side, 0, 0, 0, 1);
  for (i = 0; i < thick.length; i++) edges += line(side, 0, thick[i], far, thick[i]) + line(end, 0, thick[i], endFar, thick[i]);
  add(edges, 'edge');
})();
```
